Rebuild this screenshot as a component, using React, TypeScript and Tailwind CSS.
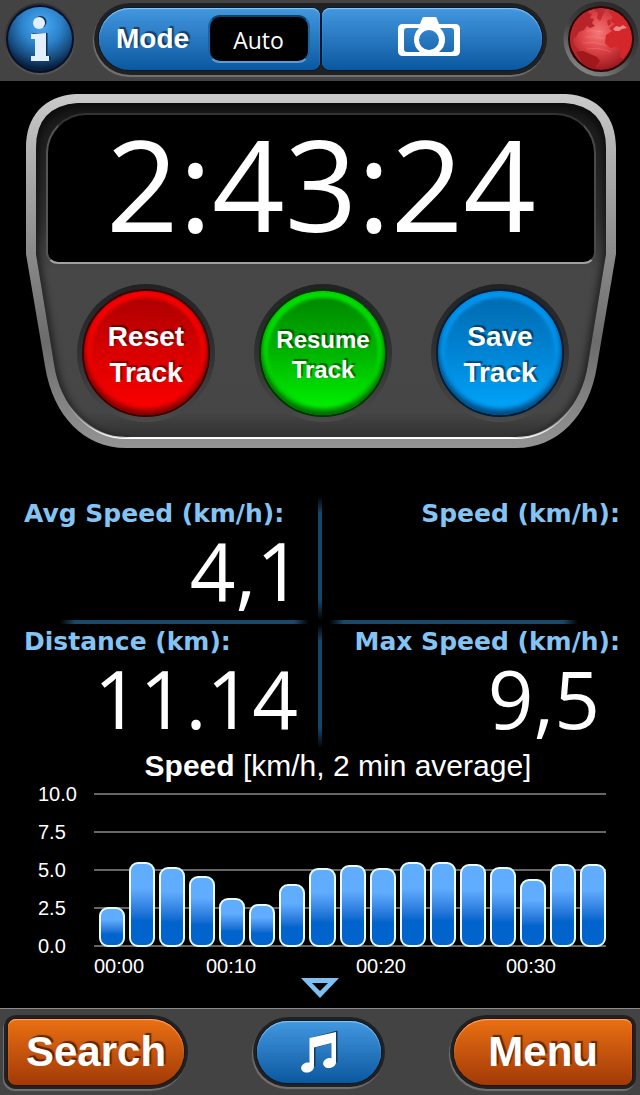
import { ReactNode } from "react";

const speeds = [
  2.6, 5.5, 5.2, 4.6, 3.2, 2.8, 4.1, 5.1, 5.3, 5.1, 5.5, 5.5, 5.4, 5.2, 4.4,
  5.4, 5.4,
];
const speedTicks = ["10.0", "7.5", "5.0", "2.5", "0.0"];
const maxSpeed = 10;

type TrackButtonProps = {
  lines: [string, string];
  className: string;
  textClassName: string;
};

const TrackButton = ({ lines, className, textClassName }: TrackButtonProps) => (
  <div className="rounded-full bg-linear-to-b from-[#202224] via-[#303132] to-[#4a4a4a] p-[5px]">
    <button
      type="button"
      className={`flex size-32 flex-col items-center justify-center rounded-full border-2 pt-1 font-bold text-white [text-shadow:2px_-2px_1px_rgba(0,0,0,0.45)] ${className} ${textClassName}`}
    >
      <span>{lines[0]}</span>
      <span>{lines[1]}</span>
    </button>
  </div>
);

type StatProps = {
  label: string;
  value?: string;
  labelClassName?: string;
  valueClassName?: string;
};

const Stat = ({
  label,
  value,
  labelClassName = "",
  valueClassName = "",
}: StatProps) => (
  <div className="flex min-w-0 flex-1 flex-col pb-3">
    <h2
      className={`font-['DejaVu_Sans',sans-serif] text-[25px] leading-9 font-bold whitespace-nowrap text-[#84c4f4] ${labelClassName}`}
    >
      {label}
    </h2>
    <p
      className={`text-right font-['Open_Sans',sans-serif] text-[80px] leading-[76px] text-white ${valueClassName}`}
    >
      {value}
    </p>
  </div>
);

const VerticalRule = () => (
  <div className="w-1 self-stretch bg-[linear-gradient(to_bottom,transparent,#12486a_14%,#12486a_84%,transparent)]" />
);

const HorizontalRule = () => (
  <div className="h-1 flex-1 bg-[linear-gradient(to_right,transparent,#17496a_6%,#17496a_94%,transparent)]" />
);

const Recess = ({
  className,
  children,
}: {
  className: string;
  children: ReactNode;
}) => (
  <div
    className={`grid bg-[#202122] shadow-[-1px_2px_1px_rgba(255,255,255,0.25)] ${className}`}
  >
    {children}
  </div>
);

const CameraIcon = () => (
  <svg viewBox="0 0 62 40" className="h-10 w-[62px]" aria-hidden="true">
    <path
      fill="#fff"
      fillRule="evenodd"
      d="M22 7 L24 2 Q24 0 26 0 H37 Q39 0 39 2 L41 7 H57 Q62 7 62 12 V34 Q62 39 57 39 H5 Q0 39 0 34 V12 Q0 7 5 7 Z M9 11 Q6 11 6 14 V32 Q6 35 9 35 H22 Q16 30 16 23 Q16 16 21 11 Z M42 11 Q47 16 47 23 Q47 30 41 35 H53 Q56 35 56 32 V14 Q56 11 53 11 Z M31 13 A10 10 0 1 0 31 33 A10 10 0 1 0 31 13 Z"
    />
  </svg>
);

const NoteIcon = () => (
  <svg viewBox="0 0 38 46" className="h-[46px] w-[38px]" aria-hidden="true">
    <g fill="#12395c" transform="translate(1.5 -1.5)">
      <path d="M10 10 L36 3 V35 H32 V15 L14 20 V39 H10 Z" />
    </g>
    <g fill="#fff">
      <path d="M9.500 9 L36 3 V34 H31.500 V14 L14 18.500 V38 H9.500 Z" />
      <ellipse cx="7.500" cy="38.500" rx="6.500" ry="5" transform="rotate(-12 7.500 38.500)" />
      <ellipse cx="29.500" cy="34" rx="6.500" ry="5" transform="rotate(-12 29.500 34)" />
    </g>
  </svg>
);

const InfoIcon = () => (
  <svg viewBox="0 0 72 72" className="size-[72px]" aria-hidden="true">
    <defs>
      <radialGradient id="info-fill" cx="0.52" cy="0.28" r="0.68">
        <stop offset="0" stopColor="#4cabf8" />
        <stop offset="0.45" stopColor="#2c84cc" />
        <stop offset="0.8" stopColor="#164a7c" />
        <stop offset="1" stopColor="#08203e" />
      </radialGradient>
      <linearGradient id="info-ring" x1="0.4" y1="0" x2="0.6" y2="1">
        <stop offset="0" stopColor="#2c2c2e" />
        <stop offset="1" stopColor="#5a5654" />
      </linearGradient>
    </defs>
    <circle cx="36" cy="36" r="36" fill="url(#info-ring)" />
    <circle cx="36" cy="36" r="34" fill="#06102a" />
    <circle cx="36" cy="36" r="32" fill="url(#info-fill)" />
    <g fill="#0c3158" transform="translate(1.500 -1)">
      <circle cx="35" cy="20" r="6" />
      <path d="M27 31 H42 V54 H45 V58 H27 V54 H31 V36 H27 Z" />
    </g>
    <g fill="#e2f0fe">
      <circle cx="35" cy="20" r="6" />
      <path d="M27 31 L42 30 V53 H45 V58 H27 V53 H31 V36 H27 Z" />
    </g>
  </svg>
);

const GlobeIcon = () => (
  <svg viewBox="0 0 76 76" className="size-[76px]" aria-hidden="true">
    <defs>
      <radialGradient id="globe-fill" cx="0.46" cy="0.4" r="0.6">
        <stop offset="0" stopColor="#f47878" />
        <stop offset="0.5" stopColor="#dc4246" />
        <stop offset="1" stopColor="#9c1a1e" />
      </radialGradient>
      <linearGradient id="globe-ring" x1="0.8" y1="0" x2="0.25" y2="1">
        <stop offset="0" stopColor="#262626" />
        <stop offset="0.5" stopColor="#3c3c3c" />
        <stop offset="1" stopColor="#8c8c8c" />
      </linearGradient>
      <clipPath id="globe-clip">
        <circle cx="38" cy="38" r="31" />
      </clipPath>
    </defs>
    <circle cx="38" cy="38" r="37.500" fill="url(#globe-ring)" />
    <circle cx="38" cy="38" r="33" fill="#2a0608" />
    <g clipPath="url(#globe-clip)">
      <circle cx="38" cy="38" r="31" fill="url(#globe-fill)" />
      <path
        fill="#b8242a"
        d="M6 26 L12 16 L20 10 L27 8 L25 12 L29 13 L27 17 L31 18 L29 22 L32 25 L27 27 L24 25 L21 29 L16 31 L13 36 L10 38 L11 44 L15 48 L18 52 L12 52 L6 46 Z"
      />
      <path
        fill="#c02a30"
        d="M31 9 L37 7 L42 10 L40 14 L37 20 L34 17 L35 12 Z M44 20 L47 18 L48 23 L45 25 Z"
      />
      <path
        fill="#d4272b"
        d="M45 10 L58 12 L68 25 L71 38 L66 50 L60 58 L57 55 L58 49 L54 46 L47 47 L42 42 L43 34 L49 30 L46 27 L52 23 L47 20 L50 16 Z"
      />
      <path
        fill="#f08888"
        d="M50 28 L53 25 L57 26 L60 24 L64 27 L59 28 L56 30 L52 30 Z"
      />
      <path
        fill="#a0181c"
        d="M13 51 L20 50 L27 53 L34 56 L37 60 L33 65 L32 70 L22 66 Z"
      />
      <g fill="none" stroke="#ffb0b0" strokeOpacity="0.25">
        <path d="M22 36 Q32 35 41 38 M20 42 Q32 40 42 44 M24 48 Q36 46 48 51 M24 30 Q30 29 40 31" />
      </g>
    </g>
  </svg>
);

const PanelFrame = () => (
  <svg
    viewBox="0 0 590 354"
    preserveAspectRatio="none"
    className="absolute inset-0 size-full"
    aria-hidden="true"
  >
    <defs>
      <linearGradient id="frame-edge" x1="0" y1="0" x2="0" y2="1">
        <stop offset="0" stopColor="#cacaca" />
        <stop offset="0.45" stopColor="#8a8a8a" />
        <stop offset="0.7" stopColor="#6c6c6c" />
        <stop offset="1" stopColor="#949494" />
      </linearGradient>
      <linearGradient id="frame-face" x1="0" y1="0" x2="0" y2="1">
        <stop offset="0" stopColor="#161616" />
        <stop offset="0.35" stopColor="#303030" />
        <stop offset="0.5" stopColor="#474747" />
        <stop offset="0.92" stopColor="#464646" />
        <stop offset="1" stopColor="#303030" />
      </linearGradient>
      <linearGradient id="frame-shine" x1="0" y1="0" x2="0" y2="1">
        <stop offset="0.9" stopColor="#fff" stopOpacity="0" />
        <stop offset="1" stopColor="#fff" />
      </linearGradient>
      <filter id="frame-soft">
        <feGaussianBlur stdDeviation="4" />
      </filter>
      <clipPath id="frame-clip">
        <path d="M52 9 H538 Q580 12 580 54 V160 L562 270 C556 312 526 344 490 344 H100 C64 344 34 312 28 270 L10 160 V54 Q10 12 52 9 Z" />
      </clipPath>
    </defs>
    <path
      fill="url(#frame-edge)"
      d="M50 0 H540 C572 2 590 22 590 54 V160 L571 272 C563 322 532 354 490 354 H100 C58 354 27 322 19 272 L0 160 V54 C0 22 18 2 50 0 Z"
    />
    <path
      fill="url(#frame-face)"
      stroke="url(#frame-shine)"
      strokeWidth="2"
      d="M52 9 H538 Q580 12 580 54 V160 L562 270 C556 312 526 344 490 344 H100 C64 344 34 312 28 270 L10 160 V54 Q10 12 52 9 Z"
    />
    <path
      clipPath="url(#frame-clip)"
      filter="url(#frame-soft)"
      fill="none"
      stroke="#000"
      strokeOpacity="0.7"
      strokeWidth="8"
      d="M100 350 C62 350 32 312 26 270 L8 160 V54 Q10 12 52 9 H538 Q580 12 582 54 V160 L564 270 C558 312 528 350 490 350"
    />
  </svg>
);

const Header = () => (
  <header className="flex items-center bg-[#434343] pt-px pr-px pb-1 pl-1">
    <button type="button" aria-label="Info" className="shrink-0 rounded-full">
      <InfoIcon />
    </button>
    <Recess className="ml-[18px] min-w-0 flex-1 grid-cols-2 gap-0.5 rounded-full p-[5px]">
      <button
        type="button"
        className="flex h-[62px] items-center justify-between rounded-l-[31px] rounded-r-lg bg-linear-to-b from-[#4298e0] to-[#0859a0] pr-2.5 pl-[17px] shadow-[inset_0_1px_1px_#8cc8f4,0_0_0_1px_#061830]"
      >
        <span className="text-[28px] leading-8 font-bold text-white [text-shadow:2px_-2px_1px_rgba(0,20,50,0.6)]">
          Mode
        </span>
        <span className="flex h-12 w-[102px] items-center justify-center rounded-xl border-2 border-t-[#0a4272] border-r-[#1865a6] border-b-[#5c9cd4] border-l-[#1865a6] bg-black pt-0.5 font-['Open_Sans',sans-serif] text-[23px] text-white">
          Auto
        </span>
      </button>
      <button
        type="button"
        aria-label="Camera"
        className="flex h-[62px] items-center justify-center rounded-l-lg rounded-r-[31px] bg-linear-to-b from-[#4298e0] to-[#0859a0] pr-1.5 pb-1 shadow-[inset_0_1px_1px_#8cc8f4,0_0_0_1px_#061830]"
      >
        <CameraIcon />
      </button>
    </Recess>
    <button
      type="button"
      aria-label="Map"
      className="ml-4 shrink-0 rounded-full"
    >
      <GlobeIcon />
    </button>
  </header>
);

const TimerPanel = () => (
  <section className="relative mt-[13px] mr-6 ml-[26px] px-5 pt-[19px] pb-6">
    <PanelFrame />
    <div className="relative flex h-[151px] items-center justify-center rounded-t-[40px] rounded-b-xl border-2 border-t-[#333] border-r-[#4a4a4a] border-b-[#a0a0a0] border-l-[#555] bg-black pb-3">
      <time className="font-['Open_Sans',sans-serif] text-[127px] leading-[132px] text-white">
        2:43:24
      </time>
    </div>
    <div className="relative mr-[27px] ml-[31px] mt-5 flex justify-between pb-0.5">
      <TrackButton
        lines={["Reset", "Track"]}
        className="border-[#3c0000] bg-linear-to-b from-[#a80000] via-[#d80000] to-[#ff0000] shadow-[inset_0_-4px_5px_1px_#800000,inset_0_0_3px_7px_#f40000]"
        textClassName="text-[28px] leading-9"
      />
      <TrackButton
        lines={["Resume", "Track"]}
        className="border-[#003400] bg-linear-to-b from-[#008400] via-[#00b400] to-[#00f800] shadow-[inset_0_-4px_5px_1px_#006c00,inset_0_0_3px_7px_#00dc00]"
        textClassName="text-2xl leading-[30px]"
      />
      <TrackButton
        lines={["Save", "Track"]}
        className="border-[#001c38] bg-linear-to-b from-[#0068ac] via-[#0084d4] to-[#00a8ff] shadow-[inset_0_-4px_5px_1px_#004c80,inset_0_0_3px_7px_#0094ec]"
        textClassName="text-[28px] leading-9"
      />
    </div>
  </section>
);

const Stats = () => (
  <section className="mt-12">
    <div className="flex">
      <Stat
        label="Avg Speed (km/h):"
        value="4,1"
        labelClassName="pl-6"
        valueClassName="pr-4"
      />
      <VerticalRule />
      <Stat label="Speed (km/h):" labelClassName="pr-5 text-right" />
    </div>
    <div className="flex gap-5 pr-[62px] pl-[60px]">
      <HorizontalRule />
      <HorizontalRule />
    </div>
    <div className="flex">
      <Stat
        label="Distance (km):"
        value="11.14"
        labelClassName="pl-6"
        valueClassName="pr-5"
      />
      <VerticalRule />
      <Stat
        label="Max Speed (km/h):"
        value="9,5"
        labelClassName="pr-5 text-right"
        valueClassName="pr-10"
      />
    </div>
  </section>
);

const SpeedChart = () => (
  <section className="pr-[34px] pl-[38px] text-white">
    <h2 className="pl-8 text-center text-3xl leading-9">
      <b>Speed</b> [km/h, 2 min average]
    </h2>
    <div className="flex">
      <div className="flex w-14 shrink-0 flex-col justify-between text-xl leading-5">
        {speedTicks.map((tick) => (
          <span key={tick}>{tick}</span>
        ))}
      </div>
      <div className="relative my-[9px] h-[154px] flex-1">
        <div className="absolute inset-0 flex flex-col justify-between">
          {speedTicks.map((tick) => (
            <div key={tick} className="h-0.5 bg-[#666]" />
          ))}
        </div>
        <div className="relative flex h-full items-end gap-1 pl-[5px]">
          {speeds.map((speed, i) => (
            <div
              key={i}
              className="flex-1 rounded-[9px] border-2 border-[#e8fbff] bg-linear-to-b from-[#60acff] from-30% to-[#0064cc] to-70%"
              style={{ height: `${(speed / maxSpeed) * 100}%` }}
            />
          ))}
        </div>
      </div>
    </div>
    <div className="flex justify-between pr-[50px] pl-14 text-xl leading-5">
      <span>00:00</span>
      <span className="ml-3">00:10</span>
      <span className="ml-[50px]">00:20</span>
      <span className="ml-[50px]">00:30</span>
    </div>
  </section>
);

const Footer = () => (
  <footer className="mt-auto flex items-center justify-between border-t border-[#8c8c8c] bg-[#434343] px-1 py-1.5">
    <Recess className="rounded-l-xl rounded-r-[37px] p-1">
      <button
        type="button"
        className="h-[66px] rounded-l-lg rounded-r-[33px] bg-linear-to-b from-[#ea7012] to-[#a23a08] px-[18px] text-[42px] leading-[60px] font-bold text-white shadow-[inset_0_1px_1px_#ffac64,0_0_0_1px_#301004] [text-shadow:2px_-2px_1px_rgba(60,20,0,0.75)]"
      >
        Search
      </button>
    </Recess>
    <Recess className="rounded-full p-1">
      <button
        type="button"
        aria-label="Music"
        className="flex h-[62px] w-[124px] items-center justify-center rounded-full bg-linear-to-b from-[#4298e0] to-[#0859a0] shadow-[inset_0_1px_1px_#8cc8f4,0_0_0_1px_#061830]"
      >
        <NoteIcon />
      </button>
    </Recess>
    <Recess className="rounded-l-[37px] rounded-r-xl p-1">
      <button
        type="button"
        className="h-[66px] rounded-l-[33px] rounded-r-lg bg-linear-to-b from-[#ea7012] to-[#a23a08] px-[34px] text-[42px] leading-[60px] font-bold text-white shadow-[inset_0_1px_1px_#ffac64,0_0_0_1px_#301004] [text-shadow:2px_-2px_1px_rgba(60,20,0,0.75)]"
      >
        Menu
      </button>
    </Recess>
  </footer>
);

const App = () => {
  return (
    <div className="flex min-h-screen flex-col bg-black font-['Liberation_Sans',Arial,sans-serif]">
      <Header />
      <main>
        <TimerPanel />
        <Stats />
        <SpeedChart />
        <button
          type="button"
          aria-label="Show more"
          className="mx-auto mt-0.5 block"
        >
          <svg viewBox="0 0 38 20" className="h-5 w-[38px]" aria-hidden="true">
            <path
              fill="#80c0f0"
              fillRule="evenodd"
              d="M0 0 H38 L19 20 Z M11 5 L19 13 L27 5 Z"
            />
          </svg>
        </button>
      </main>
      <Footer />
    </div>
  );
};

export default App;
